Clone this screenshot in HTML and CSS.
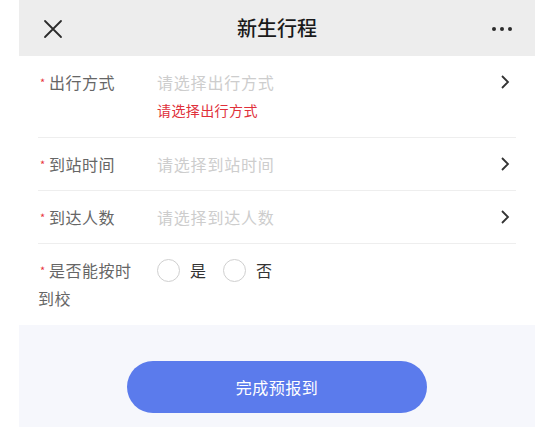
FILE: index.html
```html
<!DOCTYPE html>
<html lang="zh">
<head>
<meta charset="utf-8">
<title>新生行程</title>
<link rel="stylesheet" href="styles.css">
</head>
<body>
<div class="app">
  <header class="nav">
    <svg class="nav-close" width="20" height="20" viewBox="0 0 20 20"><path d="M2 2 L18 18 M18 2 L2 18" stroke="#2b2b2b" stroke-width="1.8" fill="none" stroke-linecap="round"/></svg>
    <h1 class="nav-title">新生行程</h1>
    <div class="nav-more"><span></span><span></span><span></span></div>
  </header>
  <main class="form">
    <div class="row row-first">
      <div class="label"><span class="req">*</span>出行方式</div>
      <div class="field">
        <div class="placeholder">请选择出行方式</div>
        <div class="error">请选择出行方式</div>
      </div>
      <svg class="chev" width="10" height="16" viewBox="0 0 10 16"><path d="M2 2 L8 8 L2 14" stroke="#333" stroke-width="1.8" fill="none"/></svg>
    </div>
    <div class="row">
      <div class="label"><span class="req">*</span>到站时间</div>
      <div class="field"><div class="placeholder">请选择到站时间</div></div>
      <svg class="chev" width="10" height="16" viewBox="0 0 10 16"><path d="M2 2 L8 8 L2 14" stroke="#333" stroke-width="1.8" fill="none"/></svg>
    </div>
    <div class="row">
      <div class="label"><span class="req">*</span>到达人数</div>
      <div class="field"><div class="placeholder">请选择到达人数</div></div>
      <svg class="chev" width="10" height="16" viewBox="0 0 10 16"><path d="M2 2 L8 8 L2 14" stroke="#333" stroke-width="1.8" fill="none"/></svg>
    </div>
    <div class="row row-last">
      <div class="label"><span class="req">*</span>是否能按时到校</div>
      <div class="field radios">
        <label class="radio"><span class="circle"></span>是</label>
        <label class="radio"><span class="circle"></span>否</label>
      </div>
    </div>
  </main>
  <footer class="actions">
    <button class="submit">完成预报到</button>
  </footer>
</div>
</body>
</html>
```
FILE: styles.css
```css
* { box-sizing: border-box; }
html, body { margin: 0; padding: 0; background: #fff; }
body { font-family: "Noto Sans CJK SC", "Noto Sans", sans-serif; }
.app { margin-left: 19px; width: 516px; height: 427px; display: flex; flex-direction: column; }
.nav { height: 56px; flex: none; background: #ededed; display: flex; align-items: center; justify-content: space-between; padding: 0 23px 0 24px; position: relative; }
.nav-close { display: block; margin-top: 2px; }
.nav-title { margin: 0; font-size: 20px; font-weight: 500; color: #1a1a1a; position: absolute; left: 0; right: 0; text-align: center; line-height: 56px; pointer-events: none; }
.nav-more { display: flex; gap: 4px; margin-top: 2px; }
.nav-more span { width: 4px; height: 4px; border-radius: 50%; background: #2b2b2b; }
.form { background: #fff; padding: 0 19px; }
.row { display: flex; align-items: flex-start; padding: 12px 0; border-bottom: 1px solid #eeeeee; }
.row-first { padding-top: 12px; padding-bottom: 13px; }
.row-last { border-bottom: none; padding-bottom: 13px; }
.label { width: 100px; margin-right: 19px; font-size: 16px; line-height: 28px; color: #666; letter-spacing: 0.5px; }
.req { display: inline-block; color: #e8343c; font-size: 11px; line-height: 11px; width: 7px; margin-right: 2px; margin-left: 2px; vertical-align: 2px; letter-spacing: 0; }
.field { flex: 1; }
.placeholder { font-size: 16px; line-height: 28px; color: #cdcdcd; letter-spacing: 0.8px; }
.error { font-size: 14px; line-height: 28px; color: #e0303a; letter-spacing: 0.4px; }
.chev { margin-top: 6px; margin-right: 6px; }
.radios { display: flex; align-items: center; height: 28px; }
.radio { display: flex; align-items: center; font-size: 16px; color: #333; margin-right: 17px; }
.circle { width: 23px; height: 23px; border: 1px solid #cfcfcf; border-radius: 50%; margin-right: 10px; }
.actions { flex: 1; background: #f6f7fc; display: flex; justify-content: center; padding-top: 36px; }
.submit { width: 300px; height: 52px; border: none; border-radius: 26px; background: #5b7bec; color: #fff; font-family: "Noto Sans CJK SC", sans-serif; font-size: 16px; letter-spacing: 0.5px; }
```
